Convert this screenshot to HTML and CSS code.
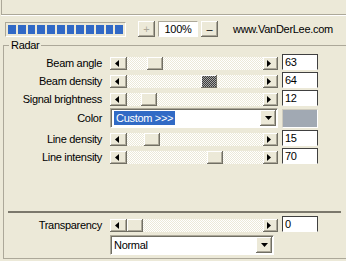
FILE: index.html
```html
<!DOCTYPE html>
<html>
<head>
  <title>Radar</title>
  <link rel="stylesheet" href="styles.css">
</head>
<body>

  <div class="topstrip"></div>

  <div class="toolbar">
    <div class="progress">
      <span class="block"></span><span class="block"></span><span class="block"></span><span class="block"></span>
      <span class="block"></span><span class="block"></span><span class="block"></span><span class="block"></span>
      <span class="block"></span><span class="block"></span><span class="block"></span><span class="block"></span>
    </div>
    <button class="btn zoom-btn plus disabled">+</button>
    <div class="zoombox">100%</div>
    <button class="btn minus">&ndash;</button>
    <span class="url">www.VanDerLee.com</span>
  </div>

  <fieldset class="group">
    <legend>Radar</legend>

    <div class="rows">
      <div class="row">
        <label>Beam angle</label>
        <div class="slider">
          <span class="sbtn left"><svg width="4" height="7"><polygon points="4,0 4,7 0,3.5"/></svg></span>
          <span class="track"><span class="thumb" style="left:20px"></span></span>
          <span class="sbtn right"><svg width="4" height="7"><polygon points="0,0 0,7 4,3.5"/></svg></span>
        </div>
        <div class="num">63</div>
      </div>

      <div class="row">
        <label>Beam density</label>
        <div class="slider">
          <span class="sbtn left"><svg width="4" height="7"><polygon points="4,0 4,7 0,3.5"/></svg></span>
          <span class="track"><span class="thumb focus" style="left:74px"></span></span>
          <span class="sbtn right"><svg width="4" height="7"><polygon points="0,0 0,7 4,3.5"/></svg></span>
        </div>
        <div class="num">64</div>
      </div>

      <div class="row">
        <label>Signal brightness</label>
        <div class="slider">
          <span class="sbtn left"><svg width="4" height="7"><polygon points="4,0 4,7 0,3.5"/></svg></span>
          <span class="track"><span class="thumb" style="left:14px"></span></span>
          <span class="sbtn right"><svg width="4" height="7"><polygon points="0,0 0,7 4,3.5"/></svg></span>
        </div>
        <div class="num">12</div>
      </div>

      <div class="row color-row">
        <label>Color</label>
        <div class="select">
          <span class="sel-text"><span class="hl">Custom &gt;&gt;&gt;</span></span>
          <span class="sel-btn"><svg width="7" height="4"><polygon points="0,0 7,0 3.5,4"/></svg></span>
        </div>
        <div class="swatch"></div>
      </div>

      <div class="row">
        <label>Line density</label>
        <div class="slider">
          <span class="sbtn left"><svg width="4" height="7"><polygon points="4,0 4,7 0,3.5"/></svg></span>
          <span class="track"><span class="thumb" style="left:17px"></span></span>
          <span class="sbtn right"><svg width="4" height="7"><polygon points="0,0 0,7 4,3.5"/></svg></span>
        </div>
        <div class="num">15</div>
      </div>

      <div class="row">
        <label>Line intensity</label>
        <div class="slider">
          <span class="sbtn left"><svg width="4" height="7"><polygon points="4,0 4,7 0,3.5"/></svg></span>
          <span class="track"><span class="thumb" style="left:80px"></span></span>
          <span class="sbtn right"><svg width="4" height="7"><polygon points="0,0 0,7 4,3.5"/></svg></span>
        </div>
        <div class="num">70</div>
      </div>
    </div>

    <div class="sep"></div>

    <div class="row transparency">
      <label>Transparency</label>
      <div class="slider">
        <span class="sbtn left"><svg width="4" height="7"><polygon points="4,0 4,7 0,3.5"/></svg></span>
        <span class="track"><span class="thumb" style="left:0px"></span></span>
        <span class="sbtn right"><svg width="4" height="7"><polygon points="0,0 0,7 4,3.5"/></svg></span>
      </div>
      <div class="num">0</div>
    </div>

    <div class="select blend">
      <span class="sel-text">Normal</span>
      <span class="sel-btn"><svg width="7" height="4"><polygon points="0,0 7,0 3.5,4"/></svg></span>
    </div>
  </fieldset>

</body>
</html>
```

FILE: styles.css
```css
* {
  box-sizing: border-box;
}

body {
  margin: 0;
  width: 346px;
  height: 261px;
  overflow: hidden;
  background: #ece9d8;
  font-family: "Liberation Sans", Arial, sans-serif;
  font-size: 11px;
  letter-spacing: -0.3px;
  color: #000;
}

.topstrip {
  height: 15px;
  margin-left: 1px;
  border-left: 1px solid #aca899;
  border-bottom: 1px solid #aca899;
  box-shadow: 0 1px #fff;
}

/* toolbar */
.toolbar {
  display: flex;
  align-items: center;
  height: 16px;
  margin-top: 6px;
}

.progress {
  display: flex;
  gap: 2px;
  width: 121px;
  height: 15px;
  margin-left: 5px;
  padding: 2px 2px 2px 2px;
  border: 1px solid;
  border-color: #aca899 #fff #fff #aca899;
}

.progress .block {
  flex: 1;
  background: #3169c6;
}

.btn {
  width: 17px;
  height: 16px;
  padding: 0;
  border: 0;
  font: inherit;
  line-height: 14px;
  background: #ece9d8;
  box-shadow: inset -1px -1px #716f64, inset 1px 1px #fff, inset -2px -2px #aca899;
}

.btn.plus {
  margin-left: 12px;
  color: #aca899;
}

.zoombox {
  width: 40px;
  height: 16px;
  margin: 0 3px;
  background: #fff;
  border: 1px solid;
  border-color: #aca899 #fff #fff #aca899;
  text-align: center;
  line-height: 14px;
}

.url {
  margin-left: 15px;
}

/* group box */
.group {
  width: 350px;
  min-width: 0;
  margin: 2px 0 0 3px;
  padding: 2px 0 3px 0;
  border: 1px solid #aca899;
}

.group legend {
  margin-left: 5px;
  padding: 0 2px;
  line-height: 13px;
}

.rows {
  display: flex;
  flex-direction: column;
  gap: 2px;
}

.row {
  display: flex;
  align-items: flex-end;
  height: 16px;
}

.row label {
  width: 98px;
  margin-right: 8px;
  text-align: right;
  line-height: 13px;
}

.color-row {
  height: 20px;
  align-items: center;
}

.color-row label {
  line-height: 20px;
}

/* slider */
.slider {
  display: flex;
  width: 168px;
  height: 13px;
}

.sbtn {
  display: flex;
  align-items: center;
  height: 13px;
  background: #ece9d8;
  box-shadow: inset -1px -1px #716f64, inset 1px 1px #fff, inset -2px -2px #aca899;
}

.sbtn.left {
  width: 17px;
  padding-left: 5px;
}

.sbtn.right {
  width: 15px;
  padding-left: 4px;
}

.track {
  flex: 1;
  position: relative;
  background: repeating-conic-gradient(#fff 0 25%, #ece9d8 0 50%) 0 0 / 2px 2px;
}

.thumb {
  position: absolute;
  top: 0;
  width: 16px;
  height: 13px;
  background: #ece9d8;
  box-shadow: inset -1px -1px #716f64, inset 1px 1px #fff, inset -2px -2px #aca899;
}

.thumb.focus {
  background: repeating-conic-gradient(#3c3c3c 0 25%, #a8a8a8 0 50%) 0 0 / 2px 2px;
  box-shadow: inset -1px -1px #716f64, inset 1px 1px #fff;
}

.num {
  width: 36px;
  height: 16px;
  margin-left: 4px;
  padding-left: 2px;
  background: #fff;
  border: 1px solid #404040;
  border-bottom-color: #fff;
  line-height: 14px;
}

/* dropdowns */
.select {
  display: flex;
  width: 168px;
  height: 20px;
  padding: 1px;
  background: #fff;
  border: 1px solid;
  border-color: #aca899 #fff #fff #aca899;
  box-shadow: inset 1px 1px #716f64;
}

.sel-text {
  flex: 1;
  padding: 1px 0 0 2px;
  line-height: 14px;
}

.hl {
  display: inline-block;
  padding: 0 2px;
  background: #316ac5;
  color: #fff;
}

.sel-btn {
  display: flex;
  align-items: center;
  justify-content: center;
  width: 16px;
  background: #ece9d8;
  box-shadow: inset -1px -1px #716f64, inset 1px 1px #fff, inset -2px -2px #aca899;
}

.swatch {
  width: 36px;
  height: 19px;
  margin-left: 4px;
  background: #a1a9b3;
  border: 1px solid;
  border-color: #cfccbf #fff #fff #cfccbf;
}

.sep {
  margin: 47px 11px 0 4px;
  border-top: 2px solid #7b786c;
}

.transparency {
  margin-top: 3px;
}

.blend {
  width: 164px;
  margin: 3px 0 0 106px;
}
```
